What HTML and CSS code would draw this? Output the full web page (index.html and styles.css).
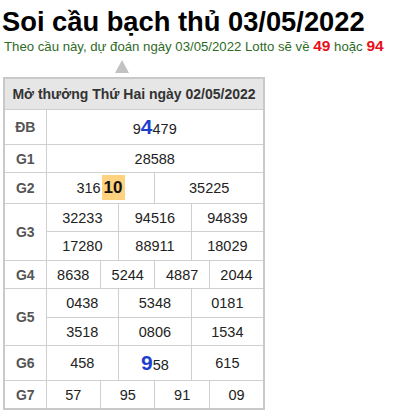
FILE: index.html
```html
<!DOCTYPE html>
<html lang="vi">
<head>
<meta charset="utf-8">
<link rel="stylesheet" href="styles.css">
</head>
<body>
<h1 class="title">Soi cầu bạch thủ 03/05/2022</h1>
<p class="sub">Theo cầu này, dự đoán ngày 03/05/2022 Lotto sẽ về <b class="hot">49</b> hoặc <b class="hot">94</b></p>
<div class="arrow-row"><span class="arrow"></span></div>
<table class="kq">
  <colgroup>
    <col class="c-label">
    <col><col><col><col><col><col><col><col><col><col><col><col>
  </colgroup>
  <thead>
    <tr><th colspan="13" class="head">Mở thưởng Thứ Hai ngày 02/05/2022</th></tr>
  </thead>
  <tbody>
    <tr class="r-big"><td class="lbl">ĐB</td><td colspan="12">9<b class="blue">4</b>479</td></tr>
    <tr><td class="lbl">G1</td><td colspan="12">28588</td></tr>
    <tr class="r-g2"><td class="lbl">G2</td><td colspan="6">316<b class="hl">10</b></td><td colspan="6">35225</td></tr>
    <tr><td class="lbl" rowspan="2">G3</td><td colspan="4">32233</td><td colspan="4">94516</td><td colspan="4">94839</td></tr>
    <tr class="r-29"><td colspan="4">17280</td><td colspan="4">88911</td><td colspan="4">18029</td></tr>
    <tr><td class="lbl">G4</td><td colspan="3">8638</td><td colspan="3">5244</td><td colspan="3">4887</td><td colspan="3">2044</td></tr>
    <tr class="r-29"><td class="lbl" rowspan="2">G5</td><td colspan="4">0438</td><td colspan="4">5348</td><td colspan="4">0181</td></tr>
    <tr><td colspan="4">3518</td><td colspan="4">0806</td><td colspan="4">1534</td></tr>
    <tr class="r-big"><td class="lbl">G6</td><td colspan="4">458</td><td colspan="4"><b class="blue">9</b>58</td><td colspan="4">615</td></tr>
    <tr><td class="lbl">G7</td><td colspan="3">57</td><td colspan="3">95</td><td colspan="3">91</td><td colspan="3">09</td></tr>
  </tbody>
</table>
</body>
</html>
```

FILE: styles.css
```css
html, body {
  margin: 0;
  background: #fff;
}
body {
  padding: 0 3px;
  font-family: "Liberation Sans", Arial, sans-serif;
  color: #222;
}
.title {
  margin: 0;
  padding-top: 7px;
  font-size: 27.3px;
  line-height: 30px;
  font-weight: bold;
  color: #000;
  margin-left: -1px;
}
.sub {
  margin: 1px 0 0 1px;
  font-size: 13.2px;
  line-height: 16px;
  color: #2e6b1f;
}
.hot {
  color: #e8101a;
  font-size: 15.5px;
}
.arrow-row {
  height: 21px;
  padding-left: 112px;
  padding-top: 5px;
  box-sizing: border-box;
}
.arrow {
  display: block;
  width: 0;
  height: 0;
  border-left: 7px solid transparent;
  border-right: 7px solid transparent;
  border-bottom: 13px solid #c2c2c2;
}
.kq {
  width: 262px;
  table-layout: fixed;
  border-collapse: collapse;
  border: 2px solid #c9c9c9;
  margin-top: 1px;
}
.c-label {
  width: 42px;
}
.kq th, .kq td {
  border: 1px solid #cfcfcf;
  text-align: center;
  padding: 0;
  height: 27px;
  font-size: 14.5px;
  white-space: nowrap;
}
.kq .head {
  background: #e6e6e6;
  font-size: 14px;
  font-weight: bold;
  color: #333;
  height: 30px;
}
.kq .lbl {
  font-weight: bold;
  color: #555;
  font-size: 14px;
}
.r-big td {
  height: 34px;
}
.r-g2 td {
  height: 30px;
}
.r-29 td {
  height: 28px;
}
.blue {
  color: #1c3fd0;
  font-size: 21px;
}
.hl {
  background: #ffd27f;
  color: #111;
  font-size: 17px;
  padding: 3px 2px;
  margin-left: 1px;
}
```
